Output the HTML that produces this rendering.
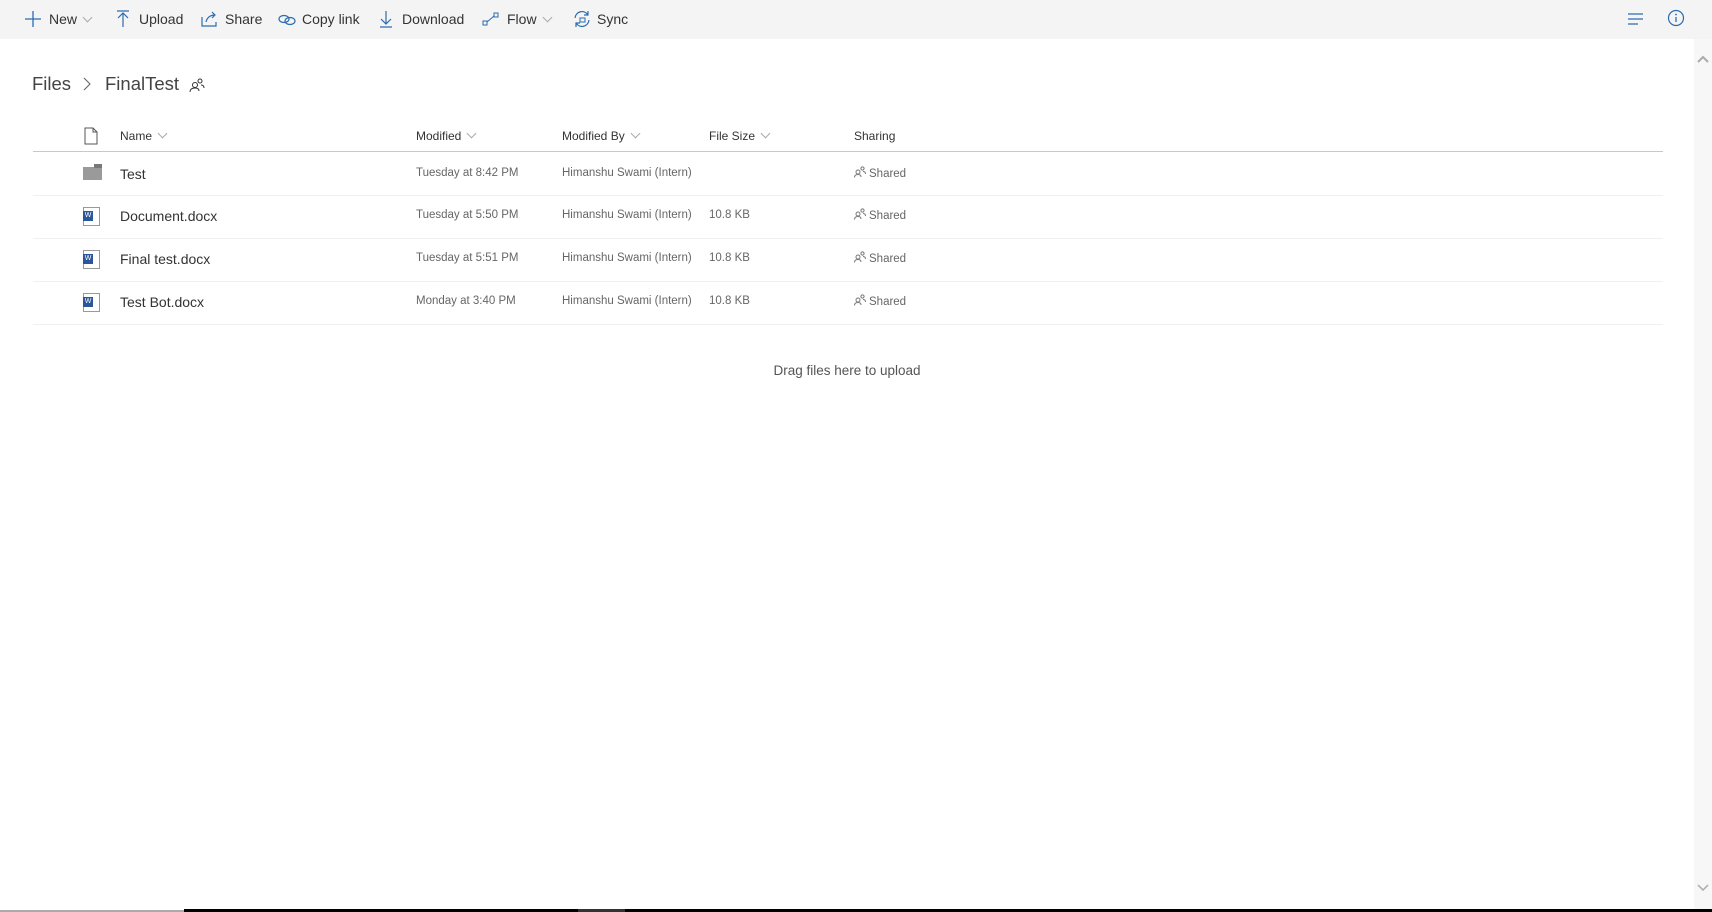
<!DOCTYPE html>
<html><head><meta charset="utf-8"><style>
*{margin:0;padding:0;box-sizing:border-box}
body{width:1712px;height:912px;overflow:hidden;background:#fff;font-family:"Liberation Sans",sans-serif;color:#333;position:relative}
.tb{position:absolute;left:0;top:0;width:1712px;height:39px;background:#f4f4f4}
.ti{position:absolute;top:11px;font-size:14px;color:#333;white-space:nowrap}
.ic{position:absolute;top:9px}
.abs{position:absolute;white-space:nowrap}
.hd{font-size:12px;color:#333;top:129px}
.chev{display:inline-block;width:7px;height:7px;border-right:1px solid #aaa;border-bottom:1px solid #aaa;transform:rotate(45deg);margin-left:7px;position:relative;top:-3px}
.sep{position:absolute;left:33px;width:1630px;height:1px;background:#f0f0f0}
.nm{font-size:14px;color:#333}
.sm{font-size:11.5px;color:#666}
.sh svg{vertical-align:-1px;margin-right:3px}
</style></head><body>
<div class="tb">
<svg class="ic" style="left:24px" width="18" height="20" viewBox="0 0 18 20"><path d="M9 2v16M1 10h16" stroke="#2b6cb0" stroke-width="1.3" fill="none"/></svg>
<div class="ti" style="left:49px">New<span class="chev"></span></div>
<svg class="ic" style="left:116px" width="14" height="20" viewBox="0 0 14 20"><path d="M1 2h12M7 4v14M2 9l5-5 5 5" stroke="#2b6cb0" stroke-width="1.2" fill="none"/></svg>
<div class="ti" style="left:139px">Upload</div>
<svg class="ic" style="left:201px" width="18" height="20" viewBox="0 0 18 20"><path d="M1 8v9h14v-4M5 13c1-5 5-7 9-7M11 3l3 3-3 3" stroke="#2b6cb0" stroke-width="1.2" fill="none"/></svg>
<div class="ti" style="left:225px">Share</div>
<svg class="ic" style="left:278px" width="18" height="20" viewBox="0 0 18 20"><ellipse cx="6" cy="10" rx="5" ry="3.5" stroke="#2b6cb0" stroke-width="1.2" fill="none"/><ellipse cx="12" cy="12" rx="5" ry="3.5" stroke="#2b6cb0" stroke-width="1.2" fill="none"/></svg>
<div class="ti" style="left:302px">Copy link</div>
<svg class="ic" style="left:379px" width="14" height="20" viewBox="0 0 14 20"><path d="M7 2v13M2 10l5 5 5-5M1 18h12" stroke="#2b6cb0" stroke-width="1.2" fill="none"/></svg>
<div class="ti" style="left:402px">Download</div>
<svg class="ic" style="left:482px" width="18" height="20" viewBox="0 0 18 20"><rect x="1" y="12" width="4" height="4" stroke="#2b6cb0" fill="none"/><rect x="12" y="4" width="4" height="4" stroke="#2b6cb0" fill="none"/><path d="M5 13l7-6" stroke="#2b6cb0" fill="none"/></svg>
<div class="ti" style="left:507px">Flow<span class="chev"></span></div>
<svg class="ic" style="left:573px" width="18" height="20" viewBox="0 0 18 20"><path d="M2 9a7 7 0 0 1 13-3M16 11a7 7 0 0 1-13 3M15 2v4h-4M3 18v-4h4" stroke="#2b6cb0" stroke-width="1.2" fill="none"/><rect x="7" y="9" width="5" height="4" stroke="#2b6cb0" fill="none"/></svg>
<div class="ti" style="left:597px">Sync</div>
<svg class="abs" style="left:1627px;top:12px" width="18" height="14" viewBox="0 0 18 14"><path d="M1 2h15M1 7h15M1 12h10" stroke="#2b6cb0" stroke-width="1.2"/></svg>
<svg class="abs" style="left:1667px;top:9px" width="18" height="18" viewBox="0 0 18 18"><circle cx="9" cy="9" r="7.5" stroke="#2b6cb0" stroke-width="1.2" fill="none"/><path d="M9 8v5" stroke="#2b6cb0" stroke-width="1.3"/><circle cx="9" cy="5.5" r="0.9" fill="#2b6cb0"/></svg>
</div>
<div class="abs" style="left:1694px;top:39px;width:18px;height:873px;background:#f7f7f7"></div>
<svg class="abs" style="left:1697px;top:55px" width="12" height="8" viewBox="0 0 12 8"><path d="M1 7l5-5 5 5" stroke="#aaa" stroke-width="2" fill="none"/></svg>
<svg class="abs" style="left:1697px;top:884px" width="12" height="8" viewBox="0 0 12 8"><path d="M1 1l5 5 5-5" stroke="#aaa" stroke-width="1.5" fill="none"/></svg>
<div class="abs" style="left:0;top:910px;width:184px;height:2px;background:#aaa"></div>
<div class="abs" style="left:184px;top:909px;width:1528px;height:3px;background:#000"></div>
<div class="abs" style="left:578px;top:909px;width:47px;height:3px;background:#333"></div>

<div class="abs" style="left:32px;top:73px;font-size:18.5px;color:#444">Files</div>
<svg class="abs" style="left:82px;top:77px" width="10" height="14" viewBox="0 0 10 14"><path d="M2 1l6 6-6 6" stroke="#666" stroke-width="1.1" fill="none"/></svg>
<div class="abs" style="left:105px;top:73px;font-size:18.5px;color:#444">FinalTest</div>
<svg class="abs" style="left:189px;top:77px" width="16" height="16" viewBox="0 0 16 16"><circle cx="6" cy="8" r="2.5" stroke="#333" fill="none"/><path d="M1 15c0-3 2-4 5-4s4 1 4 3" stroke="#333" fill="none"/><circle cx="11" cy="4" r="2" stroke="#333" fill="none"/><path d="M12 8c2 0 3 1 3 3" stroke="#333" fill="none"/></svg>

<svg class="abs" style="left:84px;top:127px" width="14" height="18" viewBox="0 0 14 18"><path d="M1 1h8l4 4v12H1z M9 1v4h4" stroke="#555" fill="none"/></svg>
<div class="abs hd" style="left:120px">Name<span class="chev"></span></div>
<div class="abs hd" style="left:416px">Modified<span class="chev"></span></div>
<div class="abs hd" style="left:562px">Modified By<span class="chev"></span></div>
<div class="abs hd" style="left:709px">File Size<span class="chev"></span></div>
<div class="abs hd" style="left:854px">Sharing</div>
<div class="abs" style="left:33px;top:151px;width:1630px;height:1px;background:#c8c8c8"></div>

<div class="abs" style="left:83px;top:167px;width:19px;height:13px;background:#9a9a9a"></div>
<div class="abs" style="left:94px;top:164px;width:8px;height:4px;background:#777"></div>
<div class="abs nm" style="left:120px;top:166px">Test</div>
<div class="abs sm" style="left:416px;top:167px">Tuesday at 8:42 PM</div>
<div class="abs sm" style="left:562px;top:167px">Himanshu Swami (Intern)</div>
<div class="abs sm sh" style="left:854px;top:166px"><svg width="12" height="12" viewBox="0 0 12 12"><circle cx="4" cy="6" r="2" stroke="#777" fill="none"/><path d="M0.5 11.5c0-2 1.5-3 3.5-3s3 1 3 2.5" stroke="#777" fill="none"/><circle cx="8.5" cy="2.5" r="1.6" stroke="#777" fill="none"/><path d="M9 5.5c1.5 0 2.5 1 2.5 2.5" stroke="#777" fill="none"/></svg>Shared</div>
<div class="sep" style="top:195px"></div>

<div class="abs" style="left:83px;top:207px;width:17px;height:19px;border:1px solid #999;background:#fff"></div>
<div class="abs" style="left:83px;top:211px;width:10px;height:10px;background:#2b579a;color:#fff;font-size:7px;text-align:center;line-height:10px">W</div>
<div class="abs nm" style="left:120px;top:208px">Document.docx</div>
<div class="abs sm" style="left:416px;top:209px">Tuesday at 5:50 PM</div>
<div class="abs sm" style="left:562px;top:209px">Himanshu Swami (Intern)</div>
<div class="abs sm" style="left:709px;top:209px">10.8 KB</div>
<div class="abs sm sh" style="left:854px;top:208px"><svg width="12" height="12" viewBox="0 0 12 12"><circle cx="4" cy="6" r="2" stroke="#777" fill="none"/><path d="M0.5 11.5c0-2 1.5-3 3.5-3s3 1 3 2.5" stroke="#777" fill="none"/><circle cx="8.5" cy="2.5" r="1.6" stroke="#777" fill="none"/><path d="M9 5.5c1.5 0 2.5 1 2.5 2.5" stroke="#777" fill="none"/></svg>Shared</div>
<div class="sep" style="top:238px"></div>

<div class="abs" style="left:83px;top:250px;width:17px;height:19px;border:1px solid #999;background:#fff"></div>
<div class="abs" style="left:83px;top:254px;width:10px;height:10px;background:#2b579a;color:#fff;font-size:7px;text-align:center;line-height:10px">W</div>
<div class="abs nm" style="left:120px;top:251px">Final test.docx</div>
<div class="abs sm" style="left:416px;top:252px">Tuesday at 5:51 PM</div>
<div class="abs sm" style="left:562px;top:252px">Himanshu Swami (Intern)</div>
<div class="abs sm" style="left:709px;top:252px">10.8 KB</div>
<div class="abs sm sh" style="left:854px;top:251px"><svg width="12" height="12" viewBox="0 0 12 12"><circle cx="4" cy="6" r="2" stroke="#777" fill="none"/><path d="M0.5 11.5c0-2 1.5-3 3.5-3s3 1 3 2.5" stroke="#777" fill="none"/><circle cx="8.5" cy="2.5" r="1.6" stroke="#777" fill="none"/><path d="M9 5.5c1.5 0 2.5 1 2.5 2.5" stroke="#777" fill="none"/></svg>Shared</div>
<div class="sep" style="top:281px"></div>

<div class="abs" style="left:83px;top:293px;width:17px;height:19px;border:1px solid #999;background:#fff"></div>
<div class="abs" style="left:83px;top:297px;width:10px;height:10px;background:#2b579a;color:#fff;font-size:7px;text-align:center;line-height:10px">W</div>
<div class="abs nm" style="left:120px;top:294px">Test Bot.docx</div>
<div class="abs sm" style="left:416px;top:295px">Monday at 3:40 PM</div>
<div class="abs sm" style="left:562px;top:295px">Himanshu Swami (Intern)</div>
<div class="abs sm" style="left:709px;top:295px">10.8 KB</div>
<div class="abs sm sh" style="left:854px;top:294px"><svg width="12" height="12" viewBox="0 0 12 12"><circle cx="4" cy="6" r="2" stroke="#777" fill="none"/><path d="M0.5 11.5c0-2 1.5-3 3.5-3s3 1 3 2.5" stroke="#777" fill="none"/><circle cx="8.5" cy="2.5" r="1.6" stroke="#777" fill="none"/><path d="M9 5.5c1.5 0 2.5 1 2.5 2.5" stroke="#777" fill="none"/></svg>Shared</div>
<div class="sep" style="top:324px"></div>

<div class="abs" style="left:0;width:1694px;top:363px;text-align:center;font-size:13.5px;color:#555">Drag files here to upload</div>
</body></html>
